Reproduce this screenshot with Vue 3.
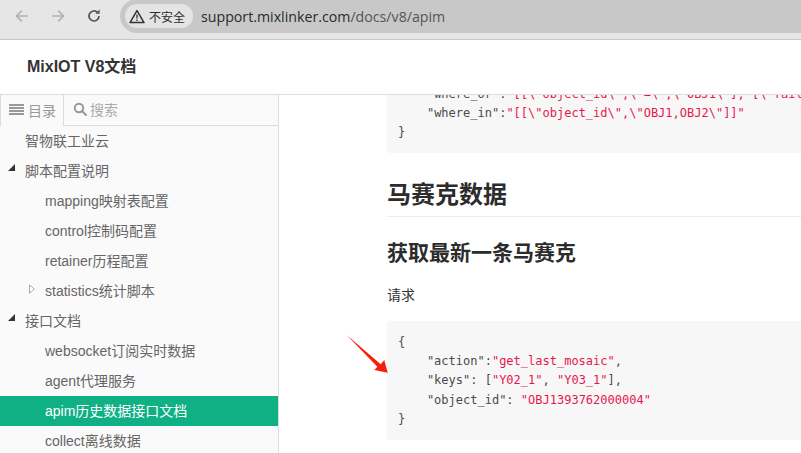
<template>
  <div class="page">
    <div class="toolbar">
      <svg class="nav" width="16" height="16" viewBox="0 0 16 16" fill="none" stroke="#b0b0b0" stroke-width="1.7"><path d="M14 8H2.5M8 2.5 2.5 8 8 13.5" /></svg>
      <svg class="nav fwd" width="16" height="16" viewBox="0 0 16 16" fill="none" stroke="#b0b0b0" stroke-width="1.7"><path d="M2 8h11.5M8 2.5 13.5 8 8 13.5" /></svg>
      <svg class="nav reload" width="16" height="16" viewBox="0 0 16 16" fill="none" stroke="#555" stroke-width="1.7"><path d="M13 8a5 5 0 1 1-1.5-3.6" /><path d="M13.6 1.6v4.2H9.4z" fill="#555" stroke="none" /></svg>
      <div class="omnibox">
        <div class="chip">
          <svg width="16" height="15" viewBox="0 0 16 15" fill="none"><path d="M8 1.6 15 13.6H1z" stroke="#333" stroke-width="1.5" stroke-linejoin="round" /><path d="M8 5.6v4M8 10.6v1.5" stroke="#333" stroke-width="1.3" /></svg>
          <span>不安全</span>
        </div>
        <span class="url">support.mixlinker.com<span class="path">/docs/v8/apim</span></span>
      </div>
    </div>
    <header class="top">MixIOT V8文档</header>
    <div class="body">
      <aside class="side">
        <div class="tabs">
          <div class="tab active">
            <svg width="15" height="11" viewBox="0 0 15 11" fill="#999"><rect y="0" width="15" height="2" /><rect y="3" width="15" height="2" /><rect y="6" width="15" height="2" /><rect y="9" width="15" height="2" /></svg>
            <span>目录</span>
          </div>
          <div class="tab search">
            <svg width="14" height="14" viewBox="0 0 14 14" fill="none" stroke="#999" stroke-width="2"><circle cx="6" cy="6" r="4.2" /><path d="M9 9l4 4" stroke-linecap="round" /></svg>
            <span>搜索</span>
          </div>
        </div>
        <ul class="tree">
          <li v-for="n in nodes" :key="n.t" class="row" :class="{ sub: n.sub, on: n.on }">
            <svg v-if="n.open" class="caret open" width="7" height="7" viewBox="0 0 7 7"><path d="M7 0v7H0z" fill="#333" /></svg>
            <svg v-if="n.closed" class="caret closed" width="6" height="10" viewBox="0 0 6 10"><path d="M.5.8 5.3 5 .5 9.2z" fill="#fff" stroke="#aaa" /></svg>
            <span>{{ n.t }}</span>
          </li>
        </ul>
      </aside>
      <main class="main">
        <pre class="code first">    <span class="k">"where_or"</span>:<span class="s">"[[\"object_id\",\"=\",\"OBJ1\"], [\"failed\",\"=\",\"0\"]]"</span>,
    <span class="k">"where_in"</span>:<span class="s">"[[\"object_id\",\"OBJ1,OBJ2\"]]"</span>
}</pre>
        <h1>马赛克数据</h1>
        <h2>获取最新一条马赛克</h2>
        <p>请求</p>
        <pre class="code">{
    "action":<span class="s">"get_last_mosaic"</span>,
    "keys": [<span class="s">"Y02_1"</span>, <span class="s">"Y03_1"</span>],
    "object_id": <span class="s">"OBJ1393762000004"</span>
}</pre>
        <svg class="arrow" width="44" height="40" viewBox="0 0 44 40"><path d="M.7 1 34.7 30.3 38.3 26 41.7 38.7 28.3 36 31.3 32.7z" fill="#f5200c" /></svg>
      </main>
    </div>
  </div>
</template>

<script setup>
const nodes = [
  { t: '智物联工业云' },
  { t: '脚本配置说明', open: true },
  { t: 'mapping映射表配置', sub: true },
  { t: 'control控制码配置', sub: true },
  { t: 'retainer历程配置', sub: true },
  { t: 'statistics统计脚本', sub: true, closed: true },
  { t: '接口文档', open: true },
  { t: 'websocket订阅实时数据', sub: true },
  { t: 'agent代理服务', sub: true },
  { t: 'apim历史数据接口文档', sub: true, on: true },
  { t: 'collect离线数据', sub: true }
]
</script>

<style>
html, body { margin: 0; overflow: hidden; background: #fff; }
</style>

<style scoped>
.page {
  width: 801px;
  height: 453px;
  overflow: hidden;
  display: flex;
  flex-direction: column;
  font-family: "Liberation Sans", "Noto Sans CJK SC", sans-serif;
  background: #fff;
}
.toolbar {
  height: 40px;
  flex: none;
  display: flex;
  align-items: center;
  box-sizing: border-box;
  padding-bottom: 7px;
  background: #e6e6e6;
  border-bottom: 1px solid #c6c6c6;
}
.nav { flex: none; margin-left: 14px; }
.fwd { margin-left: 20px; }
.reload { margin-left: 20px; }
.omnibox {
  flex: 1;
  height: 34px;
  margin-left: 18px;
  margin-right: -30px;
  border-radius: 17px;
  background: #c8c8c8;
  display: flex;
  align-items: center;
  padding-left: 5px;
}
.chip {
  height: 24px;
  padding: 0 8px 0 4px;
  border-radius: 12px;
  background: #e4e4e4;
  display: flex;
  align-items: center;
  gap: 4px;
  font-size: 12px;
  color: #2c2c2c;
}
.url { margin-left: 8px; font-size: 14.2px; font-family: "Open Sans", "Liberation Sans", sans-serif; color: #2a2a2a; }
.path { color: #555; }
.top {
  height: 55px;
  flex: none;
  box-sizing: border-box;
  border-bottom: 1px solid #ddd;
  padding: 16px 0 0 27px;
  font-size: 16px;
  line-height: 22px;
  font-weight: 700;
  color: #333;
}
.body { flex: 1; display: flex; min-height: 0; }
.side {
  width: 279px;
  flex: none;
  box-sizing: border-box;
  background: #fafafa;
  border-right: 1px solid #ddd;
}
.tabs {
  height: 31px;
  display: flex;
  box-sizing: border-box;
  border-bottom: 1px solid #ddd;
}
.tab {
  display: flex;
  align-items: center;
  gap: 4px;
  font-size: 14px;
  color: #999;
  height: 30px;
  padding-bottom: 2px;
  box-sizing: border-box;
}
.tab.active {
  width: 64px;
  padding-left: 8px;
  height: 31px;
  background: #fafafa;
  border-left: 1px solid #ddd;
  border-right: 1px solid #ddd;
  margin-bottom: -1px;
}
.tab.search { padding-left: 9px; gap: 3px; color: #aaa; }
.tree { list-style: none; margin: 0; padding: 0; }
.row {
  position: relative;
  height: 30px;
  line-height: 30px;
  padding-left: 25px;
  font-size: 14px;
  color: #666;
  white-space: nowrap;
}
.row.sub { padding-left: 45px; }
.row.on { background: #10b085; color: #fff; }
.caret { position: absolute; }
.caret.open { left: 8px; top: 8px; }
.caret.closed { left: 29px; top: 8px; }
.main {
  position: relative;
  flex: 1;
  min-width: 0;
  overflow: hidden;
  padding-left: 108px;
}
.code {
  margin: 0;
  width: 500px;
  box-sizing: border-box;
  padding: 12px 11px 11px;
  background: #f7f7f7;
  border-radius: 3px;
  font-family: "DejaVu Sans Mono", monospace;
  font-size: 12px;
  line-height: 19.2px;
  color: #4a4a4a;
}
.code.first { margin-top: -10px; padding-top: 0; height: 68px; }
.k { color: #4a4a4a; }
.s { color: #e5174f; }
h1 {
  margin: 25px 0 0;
  height: 38px;
  font-size: 24px;
  line-height: 34px;
  font-weight: 700;
  color: #2c2c2c;
  border-bottom: 1px solid #eaecef;
  width: 500px;
  box-sizing: content-box;
}
h2 {
  margin: 21px 0 0;
  font-size: 21px;
  line-height: 30px;
  font-weight: 700;
  color: #2c2c2c;
}
p {
  margin: 17px 0 16px;
  font-size: 14px;
  line-height: 20px;
  color: #333;
}
.arrow { position: absolute; left: 67px; top: 239px; }
</style>
